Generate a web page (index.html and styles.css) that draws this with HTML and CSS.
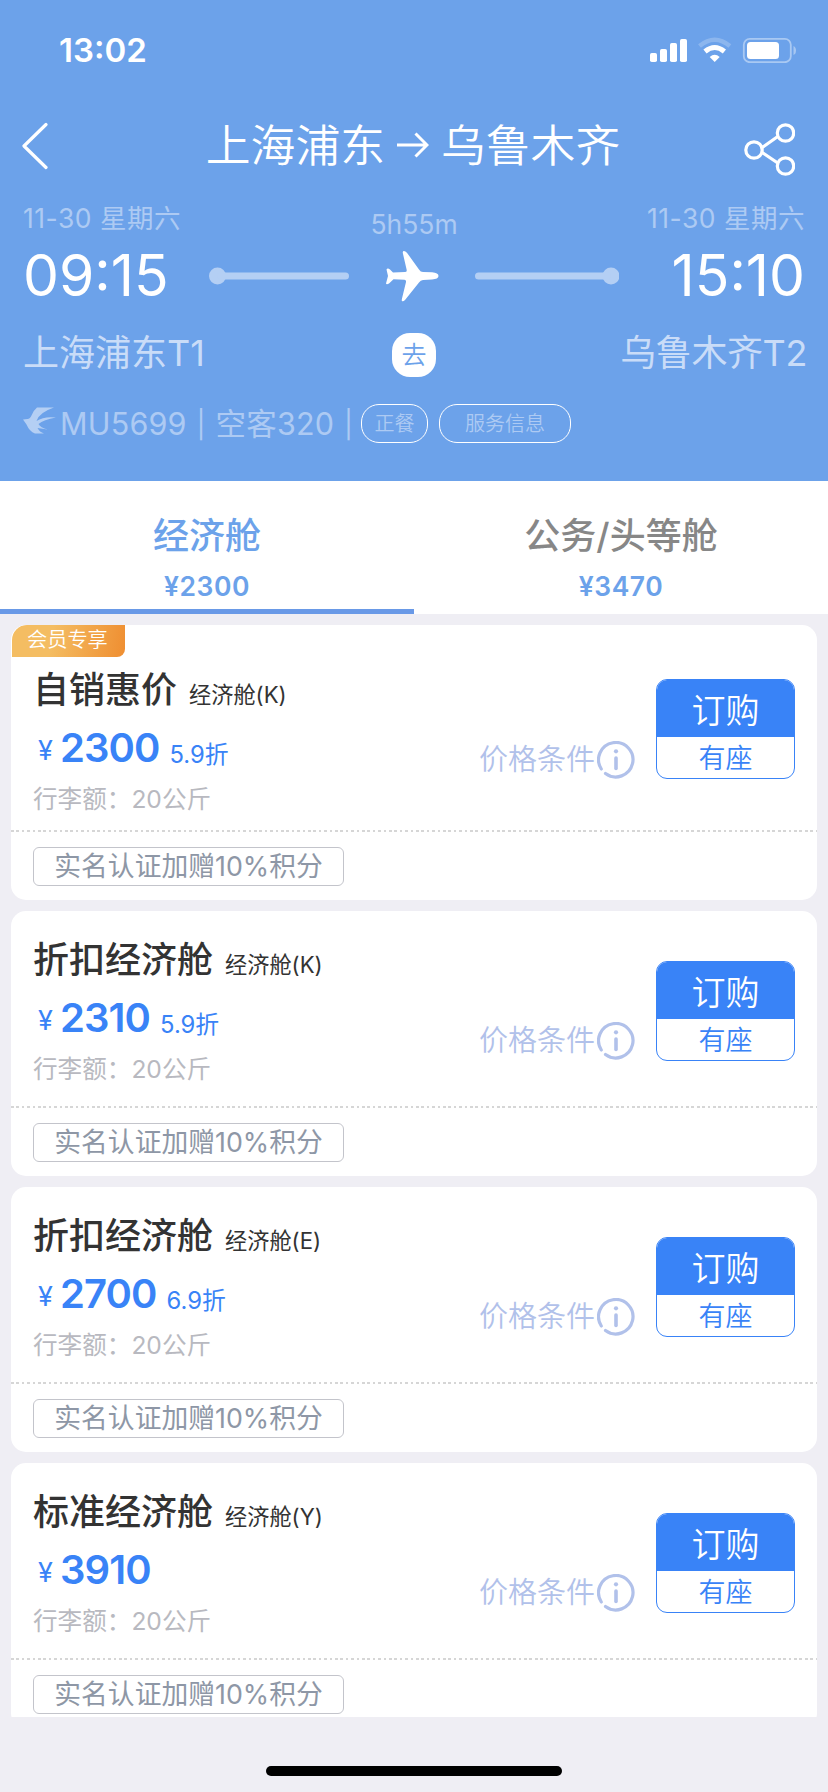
FILE: index.html
```html
<!DOCTYPE html>
<html lang="zh-CN">
<head>
<meta charset="utf-8">
<title>航班舱位</title>
<link rel="stylesheet" href="styles.css">
</head>
<body>
<div class="app">
  <header class="header">
    <div class="status">
      <span class="clock">13:02</span>
      <svg class="status-icons" viewBox="0 0 146 26" width="146" height="26">
        <g fill="#fff">
          <rect x="0" y="16" width="7" height="9" rx="1.8"/>
          <rect x="10" y="12" width="7" height="13" rx="1.8"/>
          <rect x="20" y="6" width="7" height="19" rx="1.8"/>
          <rect x="30" y="2" width="7" height="23" rx="1.8"/>
          <path d="M64.700 25 L59.700 20 Q64.700 15.500 69.700 20 Z"/>
          <rect x="97" y="5" width="32" height="17" rx="3.500"/>
          <path d="M143.500 9 Q146 10 146 13.500 Q146 17 143.500 18 Z" opacity=".4"/>
        </g>
        <path d="M55 14.500 Q64.700 6.500 74.400 14.500" fill="none" stroke="#fff" stroke-width="5"/>
        <path d="M49.500 9 Q64.700 -3.500 79.900 9" fill="none" stroke="#fff" stroke-width="4.500" opacity=".22"/>
        <rect x="93.800" y="1.800" width="47" height="23.400" rx="6" fill="none" stroke="#fff" stroke-width="1.800" opacity=".42"/>
      </svg>
    </div>
    <div class="nav">
      <svg class="back" viewBox="0 0 26 48" width="26" height="48"><path d="M24 2.500 L2 24 L24 45.500" fill="none" stroke="#fff" stroke-width="3.200" stroke-linecap="round" stroke-linejoin="round"/></svg>
      <h1 class="route"><span>上海浦东</span><svg viewBox="0 0 32 28" width="32" height="28"><path d="M0 14 H30 M18.500 2.500 L30 14 L18.500 25.500" fill="none" stroke="#fff" stroke-width="3"/></svg><span>乌鲁木齐</span></h1>
      <svg class="share" viewBox="0 0 52 54" width="52" height="54"><g fill="none" stroke="#fff" stroke-width="3.200"><circle cx="11" cy="28" r="8.200"/><circle cx="42.500" cy="11" r="8.200"/><circle cx="42.500" cy="44" r="8.200"/><path d="M18.500 26 L35.500 14 M18.500 30 L35.500 41.500"/></g></svg>
    </div>
    <div class="flight">
      <div class="end">
        <span class="date">11-30 星期六</span>
        <span class="time">09:15</span>
        <span class="port">上海浦东T1</span>
      </div>
      <div class="middle">
        <span class="duration">5h55m</span>
        <div class="track">
          <svg viewBox="0 0 140 18" width="140" height="18"><g fill="#b4cff4"><circle cx="8.500" cy="9" r="8.500"/><rect x="8" y="5.500" width="132" height="7" rx="3.500"/></g></svg>
          <svg class="plane" viewBox="0 0 54 52" width="54" height="52"><path fill="#fff" d="M19 1 Q21 1 22.500 3.500 L34 19.500 Q35.500 22 38 22 L47 22.300 Q53.500 23 53.500 26 Q53.500 29 47 29.500 L38 30 Q35.500 30 34 32.500 L20 50 Q18 52 17 51 Q16.500 50.500 17 48.500 L21 32 Q21.300 29.800 19.500 29.800 L8.500 29.300 L4 33.500 Q1.500 35 1 33.500 L3 26 L1.500 19.500 Q2.500 17.500 5 19.500 L8 22.500 L20 22 Q22 22 21.700 20 L17.800 3 Q17.500 1 19 1 Z"/></svg>
          <svg viewBox="0 0 144 18" width="144" height="18"><g fill="#b4cff4"><circle cx="136" cy="9" r="8.500"/><rect x="0" y="5.500" width="136" height="7" rx="3.500"/></g></svg>
        </div>
        <span class="leg">去</span>
      </div>
      <div class="end end-right">
        <span class="date">11-30 星期六</span>
        <span class="time">15:10</span>
        <span class="port">乌鲁木齐T2</span>
      </div>
    </div>
    <div class="info">
      <svg class="airline" viewBox="0 0 33 28" width="33" height="28"><path fill="#b4cff4" d="M31 .5 H14 Q11 3 9 7.500 Q7 12 4.500 12 L0 12.500 L3.500 17.500 Q6.500 24.500 12 26.500 H21 Q16.500 25 14.500 21 L24.500 22.500 Q17.500 20.500 15.500 17 Q20.500 12.500 33 10.500 Q21 9 13.500 14 Q16 5.500 31 .5 Z"/></svg>
      <span class="model">MU5699 <span class="bar">|</span> 空客320 <span class="bar">|</span></span>
      <span class="pill pill-meal">正餐</span>
      <span class="pill pill-service">服务信息</span>
    </div>
  </header>

  <nav class="tabs">
    <div class="tab tab-active"><span class="tab-name">经济舱</span><span class="tab-price">¥2300</span></div>
    <div class="tab"><span class="tab-name">公务/头等舱</span><span class="tab-price">¥3470</span></div>
  </nav>

  <main class="list">
    <section class="card card-member">
      <span class="member">会员专享</span>
      <div class="fare">
        <div class="detail">
          <div class="name">自销惠价<small>经济舱(K)</small></div>
          <div class="price"><i>¥</i><b>2300</b><em>5.9折</em></div>
          <div class="bag">行李额：20公斤</div>
        </div>
        <div class="terms"><span>价格条件</span><svg viewBox="0 0 38 38" width="38" height="38"><use href="#info"/></svg></div>
        <div class="buy"><span class="order">订购</span><span class="seat">有座</span></div>
      </div>
      <div class="extra"><span class="gift">实名认证加赠10%积分</span></div>
    </section>
    <section class="card">
      <div class="fare">
        <div class="detail">
          <div class="name">折扣经济舱<small>经济舱(K)</small></div>
          <div class="price"><i>¥</i><b>2310</b><em>5.9折</em></div>
          <div class="bag">行李额：20公斤</div>
        </div>
        <div class="terms"><span>价格条件</span><svg viewBox="0 0 38 38" width="38" height="38"><use href="#info"/></svg></div>
        <div class="buy"><span class="order">订购</span><span class="seat">有座</span></div>
      </div>
      <div class="extra"><span class="gift">实名认证加赠10%积分</span></div>
    </section>
    <section class="card">
      <div class="fare">
        <div class="detail">
          <div class="name">折扣经济舱<small>经济舱(E)</small></div>
          <div class="price"><i>¥</i><b>2700</b><em>6.9折</em></div>
          <div class="bag">行李额：20公斤</div>
        </div>
        <div class="terms"><span>价格条件</span><svg viewBox="0 0 38 38" width="38" height="38"><use href="#info"/></svg></div>
        <div class="buy"><span class="order">订购</span><span class="seat">有座</span></div>
      </div>
      <div class="extra"><span class="gift">实名认证加赠10%积分</span></div>
    </section>
    <section class="card">
      <div class="fare">
        <div class="detail">
          <div class="name">标准经济舱<small>经济舱(Y)</small></div>
          <div class="price"><i>¥</i><b>3910</b></div>
          <div class="bag">行李额：20公斤</div>
        </div>
        <div class="terms"><span>价格条件</span><svg viewBox="0 0 38 38" width="38" height="38"><use href="#info"/></svg></div>
        <div class="buy"><span class="order">订购</span><span class="seat">有座</span></div>
      </div>
      <div class="extra"><span class="gift">实名认证加赠10%积分</span></div>
    </section>
  </main>
  <footer class="home"><span class="home-bar"></span></footer>
</div>
<svg class="defs" width="0" height="0">
  <symbol id="info" viewBox="0 0 38 38"><g fill="none" stroke="#b1c1ea" stroke-width="3.200" stroke-linecap="round"><path d="M8.500 32.500 A17.200 17.200 0 1 0 4.300 28"/><path d="M19 17 V27.500" stroke-width="3.600"/></g><circle cx="19" cy="10.300" r="2.100" fill="#b1c1ea"/></symbol>
</svg>
</body>
</html>
```
FILE: styles.css
```css
* { box-sizing: border-box; }
body {
  margin: 0;
  font-family: Inter, "Noto Sans CJK SC", sans-serif;
  white-space: nowrap;
}
.app {
  display: flex;
  flex-direction: column;
  width: 828px;
  height: 1792px;
  overflow: hidden;
  background: #efeef4;
}
.defs { position: absolute; }

.header {
  flex: none;
  height: 481px;
  background: #6ca2ea;
  color: #fff;
}
.status {
  display: flex;
  justify-content: space-between;
  height: 100px;
  padding: 30px 32px 0 59px;
}
.clock { font-size: 33px; font-weight: 600; line-height: 40px; }
.status-icons { margin-top: 7px; }
.nav {
  display: flex;
  justify-content: space-between;
  height: 102px;
  padding: 22px 33px 0 22px;
}
.route {
  display: flex;
  gap: 12px;
  margin: -1px 0 0 35px;
  font-size: 44.800px;
  font-weight: 350;
  line-height: 50px;
}
.route svg { margin-top: 10px; }

.flight {
  display: flex;
  justify-content: space-between;
  height: 186px;
  padding: 0 23px;
}
.end { display: flex; flex-direction: column; width: 184px; }
.end-right { align-items: flex-end; }
.date, .duration { font-size: 26.500px; font-weight: 390; line-height: 32px; color: #adcaf3; }
.date { letter-spacing: .5px; }
.time { margin-top: 12px; font-size: 57px; line-height: 60px; }
.port { margin-top: 26px; font-size: 36px; font-weight: 380; line-height: 42px; color: #c9dcf8; }
.end-right .port { margin-right: -2px; letter-spacing: -.4px; }
.middle { display: flex; flex-direction: column; align-items: center; width: 410px; flex: none; }
.duration { margin-top: 6px; }
.track { display: flex; align-items: center; gap: 36px; margin-top: 10px; }
.leg {
  width: 44px;
  height: 44px;
  margin-top: 31px;
  border-radius: 18px;
  background: #fff;
  color: #6ca2ea;
  font-size: 25px;
  font-weight: 350;
  line-height: 45px;
  text-align: center;
}
.info { display: flex; align-items: center; height: 70px; padding-left: 23px; }
.airline { margin: -5px 4px 0 0; }
.model { width: 291px; margin-top: -3px; font-size: 30.500px; font-weight: 390; letter-spacing: .2px; color: #adcaf3; }
.bar { font-size: 27px; vertical-align: 1px; margin: 0 1px; }
.pill {
  display: flex;
  align-items: center;
  justify-content: center;
  height: 39px;
  margin-left: 11px;
  padding-bottom: 2px;
  border: 1px solid #fff;
  border-radius: 18px;
  font-size: 20px;
  font-weight: 350;
  color: #adcaf3;
}
.pill-meal { width: 67px; margin-left: 10px; }
.pill-service { width: 132px; }

.tabs { display: flex; flex: none; height: 133px; background: #fff; color: #6ca2ea; }
.tab {
  display: flex;
  flex: 1;
  flex-direction: column;
  align-items: center;
  padding-top: 34px;
  border-bottom: 5px solid #fff;
}
.tab-active { border-color: #6999e7; }
.tab-name { font-size: 36px; font-weight: 500; line-height: 42px; color: #878787; }
.tab-active .tab-name { color: #6ca2ea; }
.tab-price { margin-top: 13px; font-size: 26.500px; font-weight: 600; letter-spacing: .5px; line-height: 32px; }

.list {
  display: flex;
  flex: none;
  flex-direction: column;
  gap: 11px;
  height: 1103px;
  padding: 11px 11px 0;
  overflow: hidden;
}
.card {
  position: relative;
  flex: none;
  height: 265px;
  border-radius: 15px;
  background: #fff;
  overflow: hidden;
}
.card-member { height: 275px; }
.member {
  position: absolute;
  top: 0;
  left: 1px;
  width: 113px;
  height: 32px;
  padding-left: 15px;
  border-radius: 15px 0 8px 0;
  background: linear-gradient(100deg, #f4bd62 35%, #ef8e31);
  color: #fff;
  font-size: 20.200px;
  font-weight: 350;
  line-height: 30px;
}
.fare { display: flex; height: 195px; padding: 28px 22px 0; }
.card-member .fare { height: 205px; padding-top: 44px; }
.detail { width: 446px; }
.name { font-size: 36px; font-weight: 500; line-height: 42px; color: #333; }
.name small { margin-left: 12px; font-size: 22.200px; font-weight: 390; }
.price { display: flex; align-items: baseline; margin-top: 8px; height: 48px; line-height: 48px; color: #3983f7; }
.price i { width: 27px; padding-left: 5px; font-size: 27px; font-style: normal; line-height: 42px; transform: translateY(-2px); }
.price b { font-size: 40px; font-weight: 600; letter-spacing: -.9px; }
.price em { margin-left: 10px; font-size: 23.800px; font-style: normal; font-weight: 390; transform: translateY(1px); }
.bag { margin-top: 11px; font-size: 24.600px; font-weight: 380; line-height: 32px; color: #b8b9c0; }
.terms { display: flex; align-items: center; justify-content: space-between; width: 156px; height: 38px; margin-top: 83px; font-size: 29px; font-weight: 350; color: #b1c1ea; }
.terms span { padding-bottom: 6px; }
.card-member .terms { margin-top: 72px; }
.buy {
  display: flex;
  flex-direction: column;
  width: 139px;
  height: 100px;
  margin: 22px 0 0 21px;
  border: 1px solid #3983f7;
  border-radius: 11px;
  overflow: hidden;
  text-align: center;
}
.card-member .buy { margin-top: 10px; }
.order { height: 57px; background: #3983f7; color: #fff; font-size: 34px; font-weight: 350; line-height: 62px; }
.seat { color: #3983f7; font-size: 27px; font-weight: 350; line-height: 43px; }
.extra {
  height: 70px;
  padding: 17px 22px 0;
  background: repeating-linear-gradient(90deg, #d6d6d6 0 2.700px, #fff 2.700px 5.400px) 0 0 / 100% 2px no-repeat;
}
.gift {
  display: block;
  width: 311px;
  height: 39px;
  border: 1.500px solid #c3c4cb;
  border-radius: 6px;
  color: #8e97a6;
  font-size: 26.800px;
  font-weight: 380;
  line-height: 36px;
  text-align: center;
}
.home { display: flex; justify-content: center; padding-top: 49px; }
.home-bar { width: 296px; height: 10px; border-radius: 5px; background: #000; }
```
